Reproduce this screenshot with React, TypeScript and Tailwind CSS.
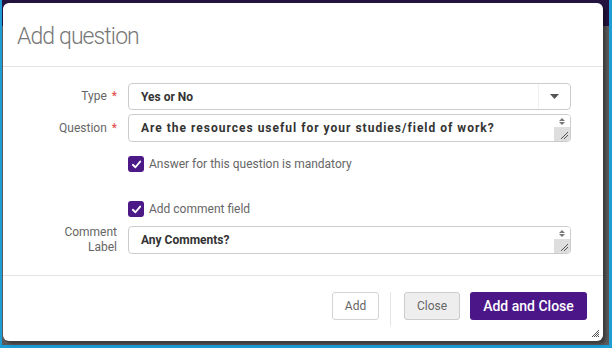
import React from "react";

const Check = () => (
  <span className="flex h-4 w-4 items-center justify-center rounded-[3px] bg-[#4b1a86]">
    <svg width="11" height="11" viewBox="0 0 12 12">
      <path d="M2 6.3 L4.8 9 L10 2.8" fill="none" stroke="#fff" strokeWidth="2" strokeLinecap="round" strokeLinejoin="round" />
    </svg>
  </span>
);

const Spinner = () => (
  <div className="flex w-[16px] flex-col self-stretch">
    <div className="flex h-[12px] items-center justify-center bg-white">
      <svg width="6" height="7" viewBox="0 0 6 7">
        <path d="M0 3 L3 0 L6 3 Z M0 4 L3 7 L6 4 Z" fill="#777" />
      </svg>
    </div>
    <div className="flex flex-1 items-end justify-end bg-[#dedede] pr-[2px] pb-[2px]">
      <svg width="8" height="8" viewBox="0 0 8 8">
        <path d="M1 8 L8 1 M4 8 L8 4" stroke="#555" strokeWidth="1" />
      </svg>
    </div>
  </div>
);

const Row = ({ label, children }: { label: React.ReactNode; children: React.ReactNode }) => (
  <div className="flex items-center">
    <div className="w-[115px] pr-[1px] text-right text-[12px] leading-[15px] text-[#666]">{label}</div>
    <div className="ml-[10px] flex-1">{children}</div>
  </div>
);

const Star = () => <span className="ml-[5px] text-[#e0443f]">*</span>;

const App = () => {
  return (
    <div
      className="h-[348px] w-[612px] overflow-hidden bg-[#1e9cd6] pr-[3px] pb-[3px] pl-[2px]"
      style={{ fontFamily: "Roboto, 'Liberation Sans', sans-serif" }}
    >
      <div className="h-full w-full bg-[linear-gradient(#24133f_0_26px,#5a5a5a_26px)] pt-[3px] pl-[1px]">
        <div className="flex h-[338px] w-[600px] flex-col rounded-[6px] bg-white shadow-[3px_3px_3px_rgba(0,0,0,0.35)]">
          <div className="flex h-[64px] items-center border-b border-[#e3e3e3] pt-[5px] pl-[14px]">
            <h1 className="text-[23px] font-light tracking-[-0.9px] text-[#777]">Add question</h1>
          </div>
          <div className="flex flex-1 flex-col pt-[16px] pr-[32px]">
            <Row
              label={
                <>
                  Type
                  <Star />
                </>
              }
            >
              <div className="flex h-[27px] items-center rounded-[4px] border border-[#ccc] bg-white">
                <span className="flex-1 pl-[12px] text-[12px] font-bold text-[#333]">Yes or No</span>
                <span className="flex h-full w-[32px] items-center justify-center border-l border-[#f0f0f0]">
                  <svg width="9" height="5" viewBox="0 0 9 5">
                    <path d="M0 0 L9 0 L4.5 5 Z" fill="#555" />
                  </svg>
                </span>
              </div>
            </Row>
            <div className="mt-[4px]">
              <Row
                label={
                  <>
                    Question
                    <Star />
                  </>
                }
              >
                <div className="flex h-[28px] items-center overflow-hidden rounded-[4px] border border-[#ccc] bg-white">
                  <span className="flex-1 pl-[12px] text-[12px] font-bold tracking-[1px] text-[#333]">
                    Are the resources useful for your studies/field of work?
                  </span>
                  <Spinner />
                </div>
              </Row>
            </div>
            <div className="mt-[13px] ml-[125px] flex items-center gap-[5px]">
              <Check />
              <span className="text-[12px] text-[#666]">Answer for this question is mandatory</span>
            </div>
            <div className="mt-[27px] ml-[125px] flex items-center gap-[5px]">
              <Check />
              <span className="text-[12px] text-[#666]">Add comment field</span>
            </div>
            <div className="mt-[7px]">
              <Row
                label={
                  <>
                    Comment
                    <br />
                    Label
                  </>
                }
              >
                <div className="flex h-[28px] items-center overflow-hidden rounded-[4px] border border-[#ccc] bg-white">
                  <span className="flex-1 pl-[12px] text-[12px] font-bold text-[#333]">Any Comments?</span>
                  <Spinner />
                </div>
              </Row>
            </div>
          </div>
          <div className="relative flex h-[66px] border-t border-[#e3e3e3] pt-[16px] pr-[16px]">
            <div className="flex flex-1 items-start justify-end">
              <button className="h-[28px] w-[47px] rounded-[3px] border border-[#d4d4d4] bg-white text-[12px] text-[#666]">
                Add
              </button>
              <div className="mx-[11px] h-[34px] w-px bg-[#e6e6e6]" />
              <button className="mx-[2px] h-[28px] w-[56px] rounded-[3px] border border-[#ccc] bg-[#eee] text-[12px] text-[#666]">
                Close
              </button>
              <button className="ml-[8px] h-[28px] w-[117px] rounded-[3px] bg-[#4b1688] text-[14px] font-medium text-white">
                Add and Close
              </button>
            </div>
            <svg className="absolute right-[4px] bottom-[4px]" width="7" height="7" viewBox="0 0 7 7">
              <path d="M0 7 L7 0 M2 7 L7 2 M4 7 L7 4 M6 7 L7 6" stroke="#444" strokeWidth="0.9" />
            </svg>
          </div>
        </div>
      </div>
    </div>
  );
};

export default App;
